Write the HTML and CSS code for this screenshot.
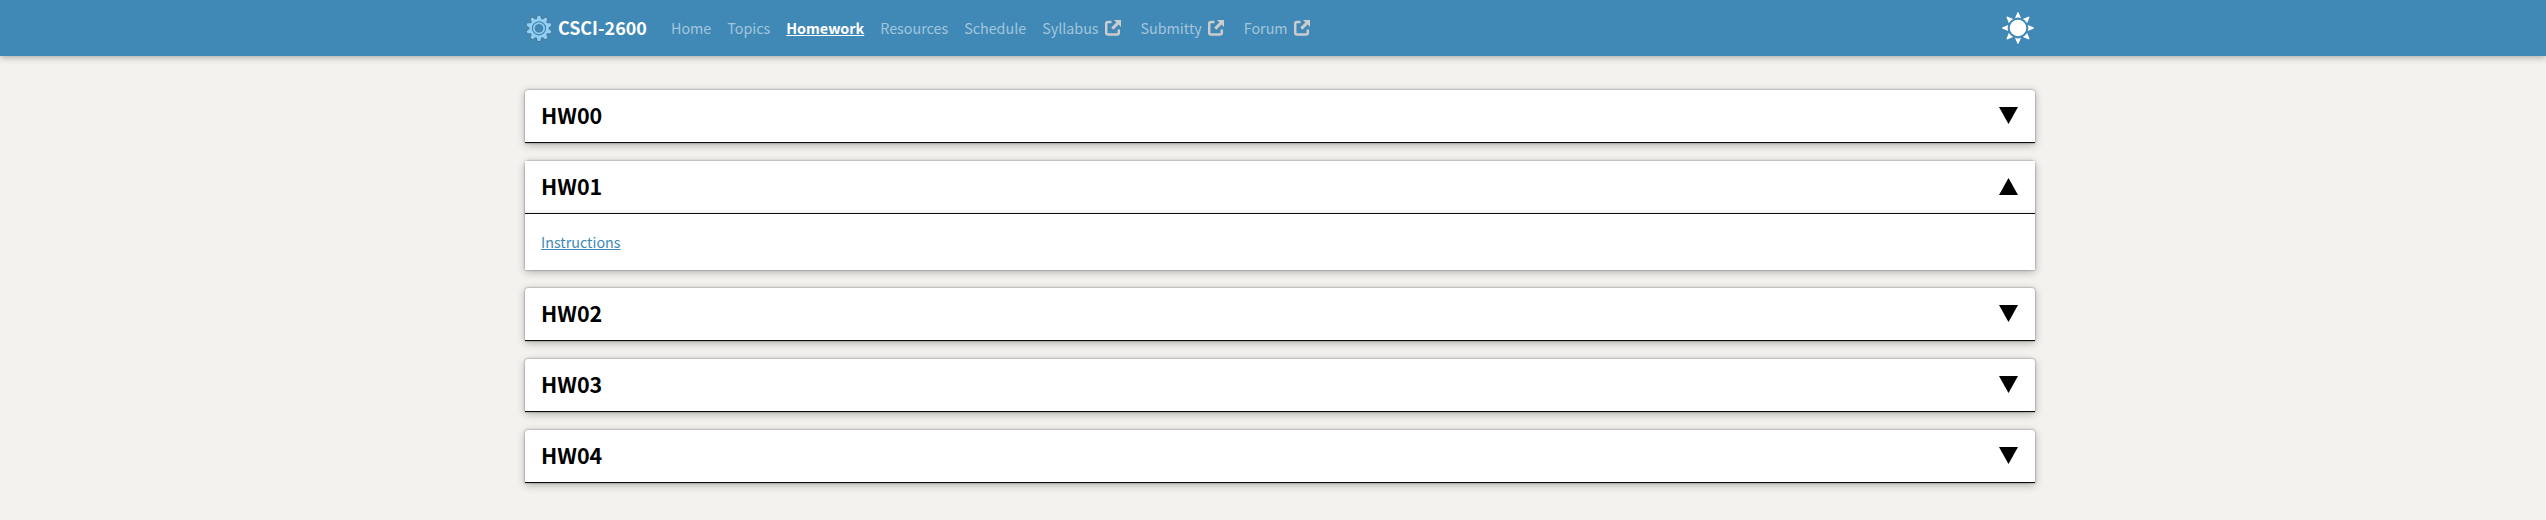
FILE: index.html
```html
<!DOCTYPE html>
<html lang="en">
<head>
<meta charset="utf-8">
<title>CSCI-2600 Homework</title>
<link rel="stylesheet" href="styles.css">
</head>
<body>
<svg class="defs" width="0" height="0">
  <symbol id="ext" viewBox="0 0 16 16"><path d="M6.5 2H3a1.8 1.8 0 0 0-1.8 1.8v9A1.8 1.8 0 0 0 3 14.6h9a1.8 1.8 0 0 0 1.8-1.8V9.5" fill="none" stroke="currentColor" stroke-width="2.5"/><path d="M9 0h7v7l-2.4-2.4-5.2 5.2-2.2-2.2 5.2-5.2z" fill="currentColor"/></symbol>
  <symbol id="tri" viewBox="0 0 19 17"><path d="M0 0H19L9.5 17Z"/></symbol>
</svg>
<header class="nav">
  <div class="nav-inner">
    <a class="brand"><svg class="gear" viewBox="-14 -14.3 28 28">
      <g class="outline">
        <path id="tooth" d="M-2.3-9L-1.2-12.6H1.2L2.3-9V9L1.2 12.6H-1.2L-2.3 9Z"/>
        <use href="#tooth" transform="rotate(36)"/><use href="#tooth" transform="rotate(72)"/><use href="#tooth" transform="rotate(108)"/><use href="#tooth" transform="rotate(144)"/>
        <circle r="9.6"/>
      </g>
      <g class="teeth">
        <use href="#tooth"/><use href="#tooth" transform="rotate(36)"/><use href="#tooth" transform="rotate(72)"/><use href="#tooth" transform="rotate(108)"/><use href="#tooth" transform="rotate(144)"/>
        <circle r="9.6"/>
      </g>
      <circle class="rim" r="6.6"/><circle class="hub" r="3.9"/>
    </svg><span>CSCI-2600</span></a>
    <nav class="links">
      <a>Home</a><a>Topics</a><a class="active">Homework</a><a>Resources</a><a>Schedule</a>
      <a class="out">Syllabus<svg><use href="#ext"/></svg></a>
      <a class="out">Submitty<svg><use href="#ext"/></svg></a>
      <a class="out">Forum<svg><use href="#ext"/></svg></a>
    </nav>
    <svg class="sun" viewBox="-16 -16 32 32"><circle r="8.3"/>
      <path id="ray" d="M-.5-15.8H.5L3-9.8Q0-11-3-9.8ZM-.5 15.8H.5L3 9.8Q0 11-3 9.8Z"/>
      <use href="#ray" transform="rotate(45)"/><use href="#ray" transform="rotate(90)"/><use href="#ray" transform="rotate(135)"/>
    </svg>
  </div>
</header>
<main class="list">
  <section class="card"><h2><span>HW00</span><svg><use href="#tri"/></svg></h2></section>
  <section class="card open"><h2><span>HW01</span><svg><use href="#tri"/></svg></h2><div class="body"><a>Instructions</a></div></section>
  <section class="card"><h2><span>HW02</span><svg><use href="#tri"/></svg></h2></section>
  <section class="card"><h2><span>HW03</span><svg><use href="#tri"/></svg></h2></section>
  <section class="card"><h2><span>HW04</span><svg><use href="#tri"/></svg></h2></section>
</main>
</body>
</html>
```

FILE: styles.css
```css
* { box-sizing: border-box; }
body {
  margin: 0;
  min-height: 520px;
  background: #f3f2ee;
  font-family: "Noto Sans CJK JP", "Noto Sans", sans-serif;
  font-size: 14.32px;
  overflow: hidden;
}
.defs { position: absolute; }
.nav {
  height: 56px;
  background: #4089b6;
  box-shadow: 0 1px 7px rgba(0, 0, 0, .35);
}
.nav-inner {
  width: 1510px;
  height: 56px;
  margin-left: 525px;
  display: flex;
  align-items: center;
}
.brand {
  display: flex;
  align-items: center;
  width: 146px;
  color: #fff;
  font-size: 17.9px;
  font-weight: 700;
  line-height: 24px;
}
.brand span { padding-bottom: 2px; }
.gear { width: 28px; height: 28px; margin-right: 5px; }
.outline { fill: #54758b; stroke: #54758b; stroke-width: 1.6; }
.teeth { fill: #8fd0f8; }
.rim { fill: #8accf5; stroke: #4f7f9f; stroke-width: 1.1; }
.hub { fill: #4089b6; stroke: #4f7f9f; stroke-width: .8; }
.links { display: flex; gap: 16px; line-height: 24px; color: #a2c5dc; }
.active {
  color: #fff;
  font-weight: 700;
  text-decoration: underline;
}
.out { display: flex; align-items: center; margin-right: 4px; }
.out svg { width: 16px; height: 16px; margin: 0 0 1px 6px; color: #ccc; }
.sun { width: 32px; height: 32px; fill: #fff; margin: 0 1px 0 auto; }
.list {
  width: 1510px;
  margin: 34px 0 0 525px;
  display: flex;
  flex-direction: column;
  gap: 18px;
}
.card {
  background: #fff;
  border-radius: 3px 3px 0 0;
  box-shadow: 0 0 2px rgba(0, 0, 20, .5), 0 2px 8px rgba(0, 0, 0, .28);
}
.card h2 {
  height: 53px;
  margin: 0;
  padding: 0 17px 0 16px;
  border-bottom: 1px solid #0c0c0c;
  display: flex;
  align-items: center;
  justify-content: space-between;
  font-size: 21.48px;
  line-height: 30px;
  color: #000;
}
.open h2 { background: linear-gradient(to top, #f1f1f1, #fff 4px); }
.card h2 span { padding-bottom: 2px; }
.card h2 svg { width: 19px; height: 17px; margin-bottom: 1px; }
.open h2 svg { transform: rotate(180deg); }
.body { height: 56px; padding: 16px; line-height: 24px; }
.body a { color: #4089b6; text-decoration: underline; }
```
